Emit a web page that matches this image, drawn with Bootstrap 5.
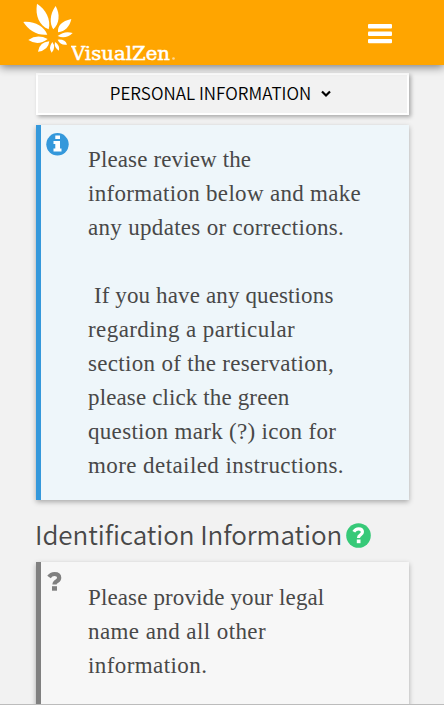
<!DOCTYPE html>
<html lang="en">
<head>
<meta charset="utf-8">
<meta name="viewport" content="width=device-width, initial-scale=1">
<title>VisualZen</title>
<link href="https://cdn.jsdelivr.net/npm/bootstrap@5.3.0/dist/css/bootstrap.min.css" rel="stylesheet">
<style>
body{height:705px;overflow:hidden;background:#f2f2f2;color:#484848;font-family:"Noto Sans CJK SC",sans-serif}
.topbar{height:65px;background:#ffa500;box-shadow:0 2px 9px rgba(0,0,0,.5);padding:0 52px 0 20px;position:relative}
.brand-word{margin:42px 0 0 -9px}
.brand-word text{font:500 19px "DejaVu Serif",serif;stroke:#fff;stroke-width:.5px}
.menu-icon{margin-top:24px}
.page{padding:8px 35px 0 36px}
.step{height:42px;border:2px solid #fff;border-radius:0;background:#f2f2f2;color:#000;font-size:17px;font-weight:350;line-height:36px;box-shadow:2px 2px 4px rgba(0,0,0,.3)}
.step span{margin:-2px 0 0 -2px;letter-spacing:.03px}
.note{border-left:5px solid #3498db;background:#eef6fa;margin-top:10px;height:375px;padding:18px 20px 0 47px;box-shadow:0 2px 5px rgba(0,0,0,.3);font:23px/34px "Liberation Serif",serif;position:relative}
.note-gray{border-color:#808080;background:#f7f7f7;height:170px;margin-top:0;padding-top:19px}
.note-icon{position:absolute;left:5px;top:8px}
.note span{display:block;white-space:pre;letter-spacing:.13px}
.note .loose{letter-spacing:.31px}
.note .looser{letter-spacing:.42px}
.title{font-size:26px;line-height:36px;height:62px;padding-top:8px;font-weight:350;margin:0}
.title span{margin:-3px 0 0 -1px;letter-spacing:-.06px}
.foot{position:absolute;left:0;right:0;top:704px;height:1px;background:#bcbcbc}
</style>
</head>
<body>
<header class="topbar d-flex justify-content-between align-items-start">
  <div class="d-flex">
    <svg width="60" height="60" viewBox="0 0 180 180" fill="#fff" aria-hidden="true">
      <path d="M51 11C45 48 58 76 86 88C94 58 76 27 51 11Z"/><path d="M107 18C88 44 89 72 100 88C118 71 121 43 107 18Z"/><path d="M154 57C125 63 112 78 114 97C135 94 149 80 154 57Z"/><path d="M158 99Q134 91 113 108Q137 119 158 99Z"/><path d="M141 134Q136 117 113 119Q121 137 141 134Z"/><path d="M117 152Q120 136 105 126Q101 142 117 152Z"/><path d="M95 158Q84 144 97 126Q109 142 95 158Z"/><path d="M54 155Q58 126 88 124Q85 152 54 155Z"/><path d="M25 120Q52 101 83 117Q54 139 25 120Z"/><path d="M10 66C43 63 71 78 82 104C52 107 26 92 10 66Z"/>
    </svg>
    <svg class="brand-word" width="106" height="22" fill="#fff"><text x="0" y="18" textLength="99" lengthAdjust="spacingAndGlyphs">VisualZen</text><circle cx="102.500" cy="16.500" r="1.300" fill="#ffd894"/></svg>
  </div>
  <svg class="menu-icon" width="24" height="20" viewBox="0 0 24 20" fill="#fff"><rect y="0" width="24" height="4.600" rx="1"/><rect y="7.500" width="24" height="4.600" rx="1"/><rect y="15" width="24" height="4.200" rx="1"/></svg>
</header>
<main class="page">
  <button class="btn step w-100 p-0 d-flex justify-content-center align-items-center"><span>PERSONAL INFORMATION</span>
    <svg class="ms-2" width="14" height="12" viewBox="0 0 14 12" fill="none" stroke="#000" stroke-width="2.200"><path d="M3 3.500L7 7.500L11 3.500"/></svg>
  </button>
  <section class="note">
    <svg class="note-icon" width="23" height="23" viewBox="0 0 23 23"><circle cx="11.500" cy="11.300" r="11.200" fill="#3498db"/><path fill="#fff" d="M9.300 2.500H14V6H9.300ZM7.500 8H14V15.500H15.500V18.500H7.500V15.500H9.300V11H7.500Z"/></svg>
    <span>Please review the</span><span class="loose">information below and make</span><span class="loose">any updates or corrections.</span><span> </span><span> If you have any questions</span><span class="looser">regarding a particular</span><span class="loose">section of the reservation,</span><span>please click the green</span><span class="loose">question mark (?) icon for</span><span class="looser">more detailed instructions.</span>
  </section>
  <h2 class="title d-flex align-items-center"><span>Identification Information</span>
    <svg class="ms-1" width="25" height="25" viewBox="0 0 25 25"><circle cx="12.500" cy="12.500" r="12.300" fill="#37c978"/><path d="M7.800 8.800Q9.500 5.800 12.700 5.800Q16.400 5.800 16.400 9Q16.400 10.800 14.500 11.900Q12.500 13 12.500 15" fill="none" stroke="#fff" stroke-width="3.200"/><path fill="#fff" d="M10.800 16.500h3.700v3.700h-3.700z"/></svg>
  </h2>
  <section class="note note-gray">
    <svg class="note-icon" width="20" height="24" viewBox="0 0 20 24"><path d="M3 7Q5 4 8.500 4Q13.200 4 13.200 7.800Q13.200 9.800 10.800 11.300Q8.500 12.700 8.500 14.500" fill="none" stroke="#808080" stroke-width="4.200"/><path fill="#808080" d="M6 16.200h5v4.500H6z"/></svg>
    <span>Please provide your legal</span><span class="looser">name and all other</span><span class="looser">information.</span>
  </section>
</main>
<div class="foot"></div>
</body>
</html>
